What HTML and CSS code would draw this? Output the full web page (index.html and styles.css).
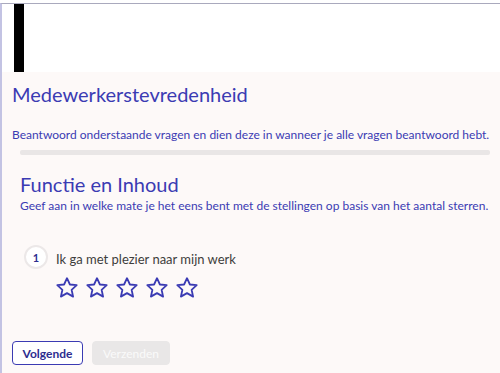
FILE: index.html
```html
<!DOCTYPE html>
<html lang="nl">
<head>
  <meta charset="UTF-8">
  <meta name="viewport" content="width=device-width, initial-scale=1.0">
  <title>Medewerkerstevredenheid</title>
  <link rel="stylesheet" href="styles.css">
</head>
<body>
  <div class="frame">
    <div class="banner">
      <div class="logo-bar"></div>
    </div>
    <div class="survey">
      <h1 class="survey-title">Medewerkerstevredenheid</h1>
      <p class="intro">Beantwoord onderstaande vragen en dien deze in wanneer je alle vragen beantwoord hebt.</p>
      <div class="progress"></div>

      <div class="section">
        <h2 class="section-title">Functie en Inhoud</h2>
        <p class="section-desc">Geef aan in welke mate je het eens bent met de stellingen op basis van het aantal sterren.</p>

        <div class="question">
          <div class="question-head">
            <span class="question-num">1</span>
            <span class="question-text">Ik ga met plezier naar mijn werk</span>
          </div>
          <div class="stars">
            <svg class="star" viewBox="0 0 24 24"><path d="M12 2.2l2.9 6.3 6.8.7-5.1 4.6 1.5 6.8L12 17.1l-6.1 3.5 1.5-6.8-5.1-4.6 6.8-.7z"/></svg>
            <svg class="star" viewBox="0 0 24 24"><path d="M12 2.2l2.9 6.3 6.8.7-5.1 4.6 1.5 6.8L12 17.1l-6.1 3.5 1.5-6.8-5.1-4.6 6.8-.7z"/></svg>
            <svg class="star" viewBox="0 0 24 24"><path d="M12 2.2l2.9 6.3 6.8.7-5.1 4.6 1.5 6.8L12 17.1l-6.1 3.5 1.5-6.8-5.1-4.6 6.8-.7z"/></svg>
            <svg class="star" viewBox="0 0 24 24"><path d="M12 2.2l2.9 6.3 6.8.7-5.1 4.6 1.5 6.8L12 17.1l-6.1 3.5 1.5-6.8-5.1-4.6 6.8-.7z"/></svg>
            <svg class="star" viewBox="0 0 24 24"><path d="M12 2.2l2.9 6.3 6.8.7-5.1 4.6 1.5 6.8L12 17.1l-6.1 3.5 1.5-6.8-5.1-4.6 6.8-.7z"/></svg>
          </div>
        </div>
      </div>

      <div class="actions">
        <button class="btn btn-outline">Volgende</button>
        <button class="btn btn-disabled" disabled>Verzenden</button>
      </div>
    </div>
  </div>
</body>
</html>
```

FILE: styles.css
```css
html, body {
  margin: 0;
  padding: 0;
  background: #fff;
}
body {
  font-family: Lato, "Open Sans", sans-serif;
  color: #3b3bb3;
  padding-top: 3px;
}
.frame {
  border-top: 1px solid #a9a9bd;
  border-left: 2px solid #c3c3e3;
  min-height: 369px;
  display: flex;
  flex-direction: column;
}
.banner {
  height: 68px;
  padding-left: 12px;
  background: #fff;
}
.logo-bar {
  width: 10px;
  height: 68px;
  background: #000;
}
.survey {
  flex: 1;
  background: #fdf9f8;
  padding: 10px 10px 0 10px;
}
.survey-title {
  margin: 0;
  font-size: 20px;
  font-weight: 400;
  line-height: 24px;
}
.intro {
  margin: 21px 0 0 0;
  font-size: 12px;
  line-height: 16px;
}
.progress {
  height: 5px;
  margin: 7px 0 0 8px;
  background: #e9e6e6;
  border-radius: 2px;
}
.section {
  padding-left: 8px;
}
.section-title {
  margin: 17px 0 0 0;
  font-size: 20px;
  font-weight: 400;
  line-height: 24px;
}
.section-desc {
  margin: 2px 0 0 0;
  font-size: 12px;
  line-height: 16px;
}
.question {
  margin-top: 31px;
  padding-left: 4px;
}
.question-head {
  display: flex;
  align-items: center;
  gap: 8px;
}
.question-num {
  width: 20px;
  height: 20px;
  border: 2px solid #ece8e8;
  border-radius: 50%;
  background: #fff;
  display: flex;
  align-items: center;
  justify-content: center;
  font-size: 11px;
  font-weight: 700;
  color: #2d2d8f;
}
.question-text {
  font-size: 13px;
  color: #3e3e3c;
  padding-top: 4px;
}
.stars {
  display: flex;
  gap: 6px;
  margin: 7px 0 0 31px;
}
.star {
  width: 24px;
  height: 24px;
  fill: none;
  stroke: #3b3bb3;
  stroke-width: 1.8;
  stroke-linejoin: round;
}
.actions {
  display: flex;
  gap: 9px;
  margin-top: 41px;
}
.btn {
  height: 24px;
  padding: 0;
  font-family: inherit;
  font-size: 12px;
  border-radius: 4px;
}
.btn-outline {
  width: 71px;
  border: 1px solid #3b3bb3;
  background: #fff;
  color: #2d2d8f;
  font-weight: 700;
}
.btn-disabled {
  width: 78px;
  border: 1px solid #e9e7e7;
  background: #e9e7e7;
  color: #fafafa;
}
```
